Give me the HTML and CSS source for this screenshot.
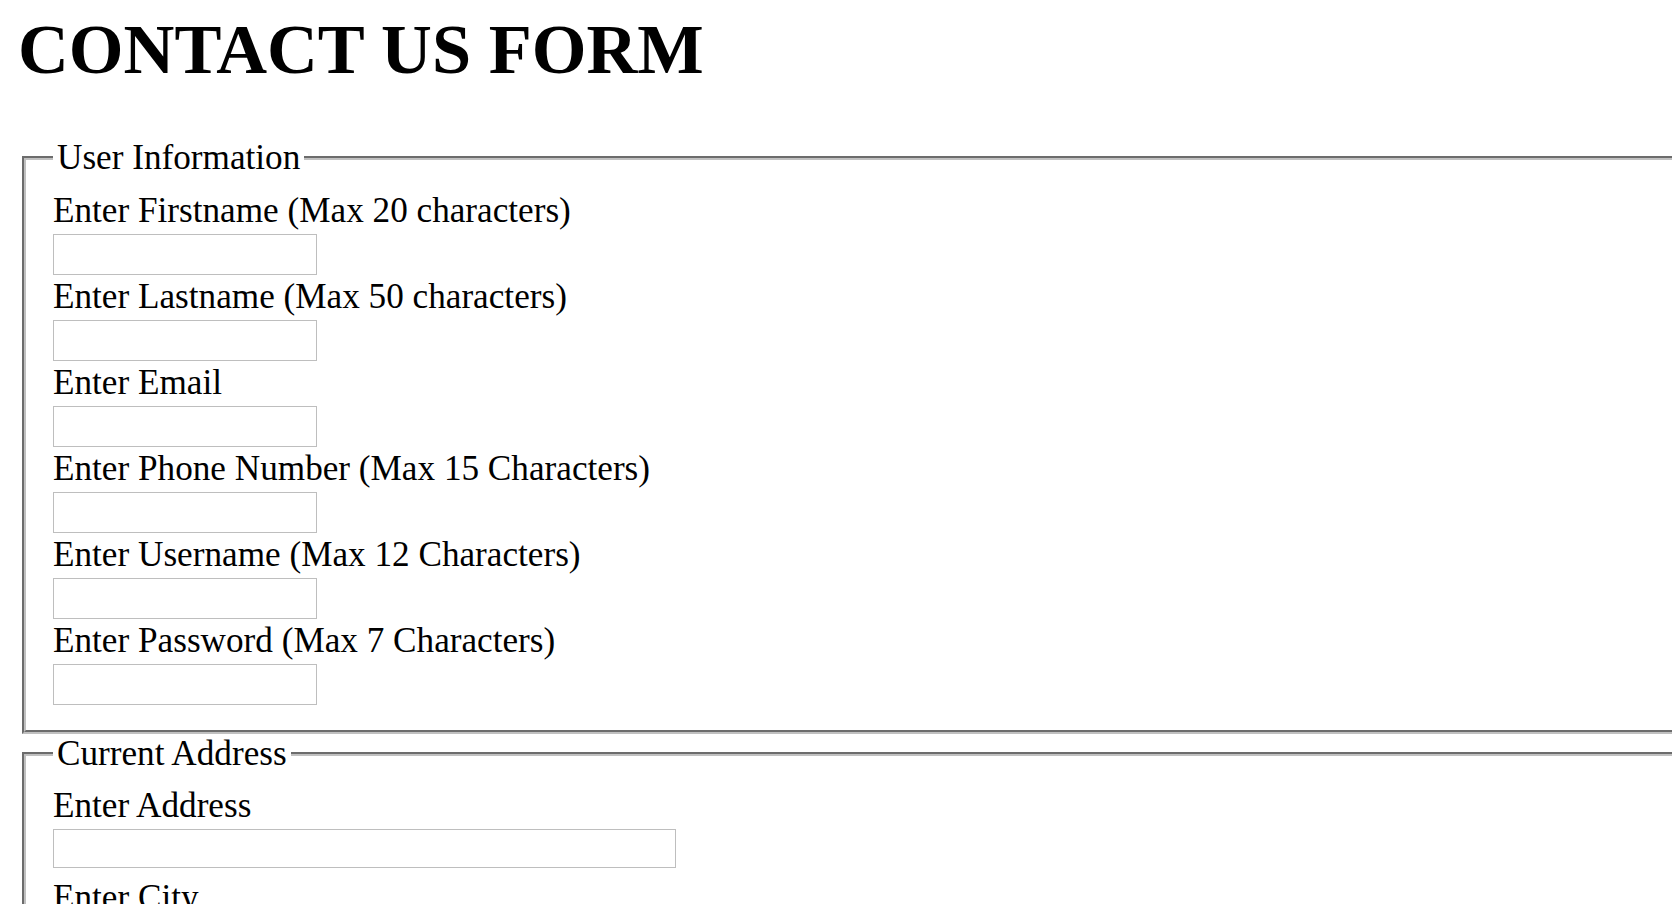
FILE: index.html
```html
<!DOCTYPE html>
<html lang="en">
<head>
<meta charset="utf-8">
<title>Contact Us Form</title>
<link rel="stylesheet" href="styles.css">
</head>
<body>
<h1 class="title">CONTACT US FORM</h1>
<form class="form">
  <fieldset class="group">
    <legend class="group-legend">User Information</legend>
    <label class="field-label" for="fname">Enter Firstname (Max 20 characters)</label>
    <input class="field-input" id="fname" type="text" maxlength="20">
    <label class="field-label" for="lname">Enter Lastname (Max 50 characters)</label>
    <input class="field-input" id="lname" type="text" maxlength="50">
    <label class="field-label" for="email">Enter Email</label>
    <input class="field-input" id="email" type="email">
    <label class="field-label" for="phone">Enter Phone Number (Max 15 Characters)</label>
    <input class="field-input" id="phone" type="text" maxlength="15">
    <label class="field-label" for="uname">Enter Username (Max 12 Characters)</label>
    <input class="field-input" id="uname" type="text" maxlength="12">
    <label class="field-label" for="pass">Enter Password (Max 7 Characters)</label>
    <input class="field-input" id="pass" type="password" maxlength="7">
  </fieldset>
  <fieldset class="group">
    <legend class="group-legend">Current Address</legend>
    <label class="field-label" for="addr">Enter Address</label>
    <input class="field-input field-input--wide" id="addr" type="text">
    <label class="field-label" for="city">Enter City</label>
    <input class="field-input" id="city" type="text">
    <label class="field-label" for="state">Enter State</label>
    <input class="field-input" id="state" type="text">
    <label class="field-label" for="zip">Enter Zip Code</label>
    <input class="field-input" id="zip" type="text">
  </fieldset>
</form>
</body>
</html>
```
FILE: styles.css
```css
html {
  overflow: hidden;
  background: #fff;
}

body {
  margin: 0 0 0 18px;
  font-family: "Liberation Serif", "Times New Roman", Times, serif;
  font-size: 35.2px;
  color: #000;
}

.title {
  margin: 9px 0 48px;
  font-size: 70.4px;
  line-height: 81px;
  font-weight: bold;
}

.form {
  margin: 0 -60px 0 0;
}

.group {
  display: flex;
  flex-direction: column;
  align-items: flex-start;
  margin: 0 0 0 4px;
  padding: 12.5px 27px 23px;
  border: 4px groove rgb(192, 192, 192);
  min-width: 0;
}

.group-legend {
  padding: 0 4px;
  line-height: 40px;
  font-size: 35.2px;
}

.field-label {
  display: block;
  line-height: 40px;
}

.field-input {
  display: block;
  box-sizing: border-box;
  width: 264px;
  height: 41px;
  margin: 3px 0 2px;
  padding: 0 4px;
  border: 1px solid #bebebe;
  border-radius: 0;
  background: #fff;
  font-family: "Liberation Sans", Arial, sans-serif;
  font-size: 29px;
  outline: none;
}

.field-input--wide {
  width: 623px;
  height: 39px;
  margin: 3px 0 10px;
}
```
